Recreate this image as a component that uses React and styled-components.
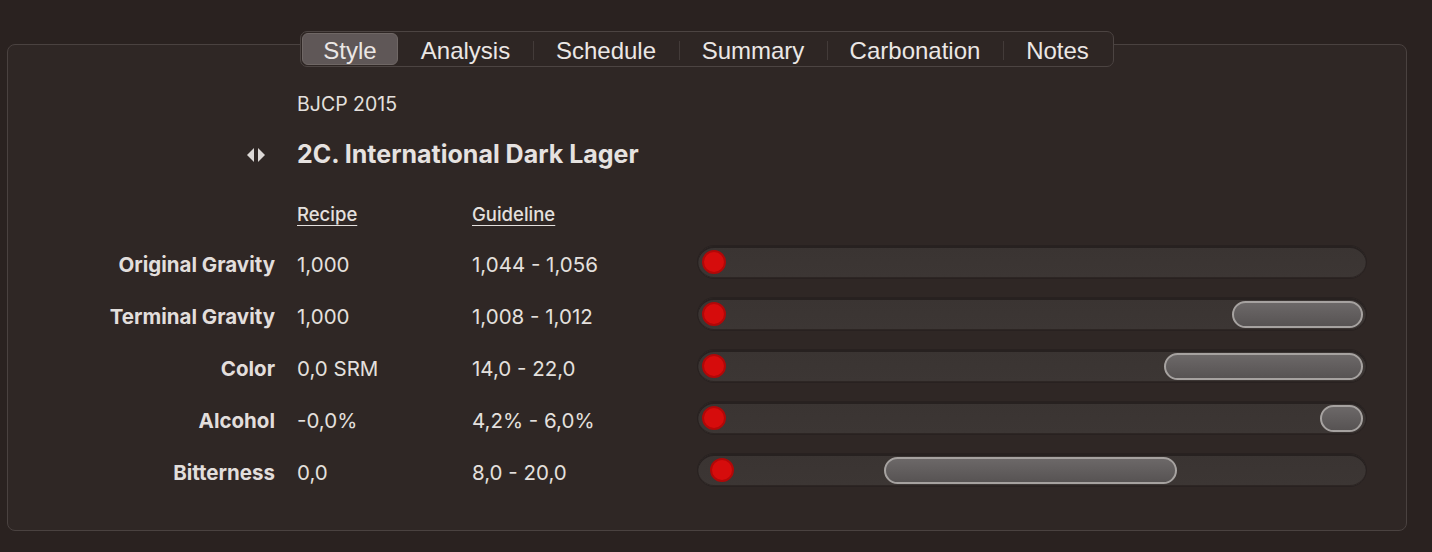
import React from 'react';
import styled, { createGlobalStyle } from 'styled-components';

const GlobalStyle = createGlobalStyle`
  html, body {
    margin: 0;
    padding: 0;
    background: #2a2220;
  }
  body {
    font-family: Inter, "Noto Sans", sans-serif;
    color: #e4e0de;
  }
`;

const Page = styled.div`
  width: 1432px;
  height: 552px;
  padding: 31px 25px 0 7px;
  box-sizing: border-box;
  display: flex;
  flex-direction: column;
  align-items: stretch;
`;

const TabBar = styled.div`
  position: relative;
  z-index: 1;
  align-self: center;
  display: flex;
  align-items: center;
  height: 36px;
  box-sizing: border-box;
  padding: 1px;
  background: #2e2624;
  border: 1px solid #4c4442;
  border-radius: 7px;
`;

const Tab = styled.div`
  position: relative;
  height: 32px;
  display: flex;
  align-items: center;
  justify-content: center;
  box-sizing: border-box;
  padding-top: 3px;
  width: ${p => p.$w}px;
  font-family: "Liberation Sans", Arial, sans-serif;
  font-size: 24px;
  color: #ebe7e5;
  border-radius: 6px;
  background: ${p => (p.$active ? '#5f5757' : 'transparent')};
  border: 1px solid ${p => (p.$active ? '#6f6765' : 'transparent')};

  &::before {
    content: '';
    display: ${p => (p.$divider ? 'block' : 'none')};
    position: absolute;
    left: -1px;
    top: 7px;
    width: 1px;
    height: 19px;
    background: #433b39;
  }
`;

const Panel = styled.div`
  margin-top: -23px;
  height: 487px;
  box-sizing: border-box;
  background: #2f2725;
  border: 1px solid #4a4240;
  border-radius: 8px;
  padding: 34px 39px 0 0;
`;

const Row = styled.div`
  display: grid;
  grid-template-columns: 289px 175px 225px 1fr;
  align-items: center;
  height: ${p => p.$h}px;
  margin-top: ${p => p.$mt || 0}px;
`;

const Label = styled.div`
  justify-self: end;
  padding-right: 22px;
  font-size: 20.5px;
  font-weight: 700;
  color: #e2dedc;
  white-space: nowrap;
`;

const Cell = styled.div`
  font-size: 20.5px;
  color: #e4e0de;
  white-space: nowrap;
`;

const Family = styled.div`
  grid-column: 2 / span 2;
  font-size: 19.5px;
  color: #e4e0de;
`;

const Title = styled.div`
  grid-column: 2 / span 3;
  font-size: 25px;
  font-weight: 700;
  color: #e6e2e0;
`;

const Stepper = styled.div`
  justify-self: end;
  margin-right: 31px;
  display: flex;
  align-items: center;
  margin-top: 2px;
`;

const ColHead = styled.div`
  font-size: 18.5px;
  font-weight: 500;
  color: #e4e0de;
  text-decoration: underline;
  text-underline-offset: 4px;
  text-decoration-thickness: 1px;
`;

const Track = styled.div`
  position: relative;
  margin-top: -5px;
  height: 34px;
  box-sizing: border-box;
  border-radius: 17px;
  background: linear-gradient(#3a3432, #3c3634);
  border: 1px solid #282120;
  box-shadow: inset 0 2px 0 #272120, inset 0 -1px 0 #2d2624;
`;

const Range = styled.div`
  position: absolute;
  top: 3px;
  height: 27px;
  box-sizing: border-box;
  border-radius: 14px;
  border: 2px solid #a6a2a0;
  background: linear-gradient(#6c6868, #575353);
`;

const Dot = styled.div`
  position: absolute;
  top: 4px;
  width: 24px;
  height: 24px;
  box-sizing: border-box;
  border-radius: 50%;
  background: #d60c0c;
  border: 2px solid #b00808;
`;

const tabs = [
  { name: 'Style', w: 96 },
  { name: 'Analysis', w: 135 },
  { name: 'Schedule', w: 146 },
  { name: 'Summary', w: 148 },
  { name: 'Carbonation', w: 176 },
  { name: 'Notes', w: 109 },
];

const rows = [
  { label: 'Original Gravity', recipe: '1,000', guide: '1,044 - 1,056', dot: 5, range: null },
  { label: 'Terminal Gravity', recipe: '1,000', guide: '1,008 - 1,012', dot: 5, range: [534, 131] },
  { label: 'Color', recipe: '0,0 SRM', guide: '14,0 - 22,0', dot: 5, range: [466, 199] },
  { label: 'Alcohol', recipe: '-0,0%', guide: '4,2% - 6,0%', dot: 5, range: [622, 43] },
  { label: 'Bitterness', recipe: '0,0', guide: '8,0 - 20,0', dot: 13, range: [186, 293] },
];

const StepArrows = () => (
  <svg width="20" height="14" viewBox="0 0 20 14">
    <path d="M8 0 L1 7 L8 14 Z" fill="#dcd8d6" />
    <path d="M12 0 L19 7 L12 14 Z" fill="#dcd8d6" />
  </svg>
);

export default function App() {
  return (
    <>
      <GlobalStyle />
      <Page>
        <TabBar>
          {tabs.map((t, i) => (
            <Tab key={t.name} $w={t.w} $active={i === 0} $divider={i > 1}>
              {t.name}
            </Tab>
          ))}
        </TabBar>
        <Panel>
          <Row $h={50}>
            <div />
            <Family>BJCP 2015</Family>
          </Row>
          <Row $h={50}>
            <Stepper><StepArrows /></Stepper>
            <Title>2C. International Dark Lager</Title>
          </Row>
          <Row $h={48} $mt={11}>
            <div />
            <ColHead>Recipe</ColHead>
            <ColHead>Guideline</ColHead>
          </Row>
          {rows.map(r => (
            <Row key={r.label} $h={52}>
              <Label>{r.label}</Label>
              <Cell>{r.recipe}</Cell>
              <Cell>{r.guide}</Cell>
              <Track>
                {r.range && (
                  <Range style={{ left: r.range[0], width: r.range[1] }} />
                )}
                <Dot style={{ left: r.dot - 1 }} />
              </Track>
            </Row>
          ))}
        </Panel>
      </Page>
    </>
  );
}
